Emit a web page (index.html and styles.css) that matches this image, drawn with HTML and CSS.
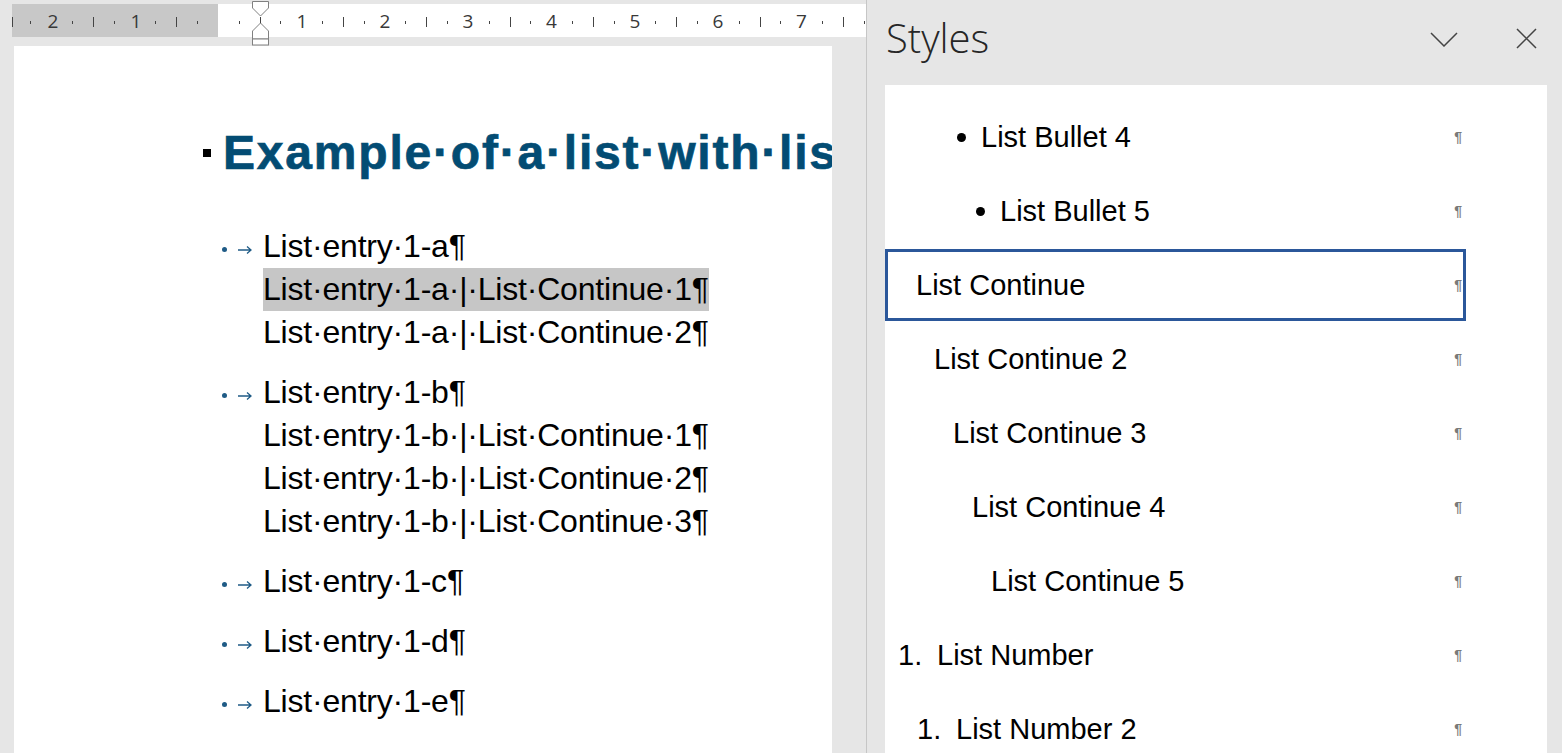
FILE: index.html
```html
<!DOCTYPE html>
<html lang="en">
<head>
  <meta charset="UTF-8" />
  <title>Styles pane - List Continue</title>
  <link rel="stylesheet" href="styles.css">
</head>
<body>

  <div class="app">
    <!-- Document area: ruler + page -->
    <div class="workspace">
      <svg class="ruler" width="866" height="46" viewBox="0 0 866 46">
        <rect x="12" y="4" width="206" height="33" fill="#c8c8c8" />
        <rect x="218" y="4" width="648" height="33" fill="#ffffff" />
        <g fill="#444">
          <rect x="12" y="17" width="1" height="10" />
          <rect x="30" y="21" width="1" height="3" />
          <rect x="72" y="21" width="1" height="3" />
          <rect x="93" y="17" width="1" height="10" />
          <rect x="114" y="21" width="1" height="3" />
          <rect x="155" y="21" width="1" height="3" />
          <rect x="176" y="17" width="1" height="10" />
          <rect x="197" y="21" width="1" height="3" />
          <rect x="239" y="21" width="1" height="3" />
          <rect x="260" y="17" width="1" height="10" />
          <rect x="280" y="21" width="1" height="3" />
          <rect x="322" y="21" width="1" height="3" />
          <rect x="343" y="17" width="1" height="10" />
          <rect x="364" y="21" width="1" height="3" />
          <rect x="405" y="21" width="1" height="3" />
          <rect x="426" y="17" width="1" height="10" />
          <rect x="447" y="21" width="1" height="3" />
          <rect x="489" y="21" width="1" height="3" />
          <rect x="510" y="17" width="1" height="10" />
          <rect x="530" y="21" width="1" height="3" />
          <rect x="572" y="21" width="1" height="3" />
          <rect x="593" y="17" width="1" height="10" />
          <rect x="614" y="21" width="1" height="3" />
          <rect x="655" y="21" width="1" height="3" />
          <rect x="676" y="17" width="1" height="10" />
          <rect x="697" y="21" width="1" height="3" />
          <rect x="739" y="21" width="1" height="3" />
          <rect x="760" y="17" width="1" height="10" />
          <rect x="780" y="21" width="1" height="3" />
          <rect x="822" y="21" width="1" height="3" />
          <rect x="843" y="17" width="1" height="10" />
          <rect x="864" y="21" width="1" height="3" />
        </g>
        <g class="ruler-num" text-anchor="middle">
          <text x="53" y="28">2</text>
          <text x="136" y="28">1</text>
          <text x="302" y="28">1</text>
          <text x="385" y="28">2</text>
          <text x="468" y="28">3</text>
          <text x="551.5" y="28">4</text>
          <text x="635" y="28">5</text>
          <text x="718" y="28">6</text>
          <text x="801.5" y="28">7</text>
        </g>
        <!-- indent markers -->
        <g fill="#fff" stroke="#808080" stroke-width="1">
          <polygon points="252.5,1.5 268.5,1.5 268.5,8 260.5,16 252.5,8" />
          <polygon points="260.5,23 268.5,31 268.5,39 252.5,39 252.5,31" />
          <rect x="252.5" y="39" width="16" height="6" />
        </g>
      </svg>

      <div class="page">
        <h1 class="heading"><span class="heading-mark"></span>Example·of·a·list·with·list·continue·paragraphs¶</h1>

        <div class="entry">
          <div class="marker"><span class="dot"></span><svg class="tab" width="14" height="8" viewBox="0 0 14 8"><path d="M0 4H13M9 0.5L13 4L9 7.5" /></svg></div>
          <div class="lines">
            <div class="line">List·entry·1-a¶</div>
            <div class="line"><span class="hl">List·entry·1-a·|·List·Continue·1¶</span></div>
            <div class="line">List·entry·1-a·|·List·Continue·2¶</div>
          </div>
        </div>

        <div class="entry">
          <div class="marker"><span class="dot"></span><svg class="tab" width="14" height="8" viewBox="0 0 14 8"><path d="M0 4H13M9 0.5L13 4L9 7.5" /></svg></div>
          <div class="lines">
            <div class="line">List·entry·1-b¶</div>
            <div class="line">List·entry·1-b·|·List·Continue·1¶</div>
            <div class="line">List·entry·1-b·|·List·Continue·2¶</div>
            <div class="line">List·entry·1-b·|·List·Continue·3¶</div>
          </div>
        </div>

        <div class="entry">
          <div class="marker"><span class="dot"></span><svg class="tab" width="14" height="8" viewBox="0 0 14 8"><path d="M0 4H13M9 0.5L13 4L9 7.5" /></svg></div>
          <div class="lines"><div class="line">List·entry·1-c¶</div></div>
        </div>

        <div class="entry">
          <div class="marker"><span class="dot"></span><svg class="tab" width="14" height="8" viewBox="0 0 14 8"><path d="M0 4H13M9 0.5L13 4L9 7.5" /></svg></div>
          <div class="lines"><div class="line">List·entry·1-d¶</div></div>
        </div>

        <div class="entry">
          <div class="marker"><span class="dot"></span><svg class="tab" width="14" height="8" viewBox="0 0 14 8"><path d="M0 4H13M9 0.5L13 4L9 7.5" /></svg></div>
          <div class="lines"><div class="line">List·entry·1-e¶</div></div>
        </div>
      </div>
    </div>

    <!-- Styles pane -->
    <aside class="pane">
      <div class="pane-head">
        <h2 class="pane-title">Styles</h2>
        <svg class="icon-chevron" width="28" height="15" viewBox="0 0 28 15"><polyline points="1,1 14,14 27,1" /></svg>
        <svg class="icon-close" width="21" height="21" viewBox="0 0 21 21"><path d="M1 1L20 20M20 1L1 20" /></svg>
      </div>

      <div class="style-list">
        <div class="style-row">
          <span class="bullet lb4"></span><span class="label">List Bullet 4</span>
          <span class="pilcrow">¶</span>
        </div>
        <div class="style-row">
          <span class="bullet lb5"></span><span class="label">List Bullet 5</span>
          <span class="pilcrow">¶</span>
        </div>
        <div class="style-row selected">
          <span class="label lc1">List Continue</span>
          <span class="pilcrow">¶</span>
        </div>
        <div class="style-row">
          <span class="label lc2">List Continue 2</span>
          <span class="pilcrow">¶</span>
        </div>
        <div class="style-row">
          <span class="label lc3">List Continue 3</span>
          <span class="pilcrow">¶</span>
        </div>
        <div class="style-row">
          <span class="label lc4">List Continue 4</span>
          <span class="pilcrow">¶</span>
        </div>
        <div class="style-row">
          <span class="label lc5">List Continue 5</span>
          <span class="pilcrow">¶</span>
        </div>
        <div class="style-row">
          <span class="num ln1">1.</span><span class="label">List Number</span>
          <span class="pilcrow">¶</span>
        </div>
        <div class="style-row">
          <span class="num ln2">1.</span><span class="label">List Number 2</span>
          <span class="pilcrow">¶</span>
        </div>
      </div>
    </aside>
  </div>

</body>
</html>
```

FILE: styles.css
```css
body {
  margin: 0;
  background: #e6e6e6;
  font-family: "Liberation Sans", Arial, sans-serif;
  overflow: hidden;
}

.app {
  display: flex;
  height: 753px;
}

/* --- Document side --- */
.workspace {
  width: 866px;
  flex: none;
  display: flex;
  flex-direction: column;
}

.ruler {
  display: block;
}

.ruler-num {
  font-family: "Open Sans", sans-serif;
  font-size: 19px;
  fill: #383838;
}

.page {
  margin-left: 14px;
  width: 818px;
  flex: 1;
  background: #fff;
  box-sizing: border-box;
  padding: 80px 0 0 189px;
  overflow: hidden;
  white-space: nowrap;
}

.heading {
  display: flex;
  align-items: center;
  margin: 0 0 45px;
  font-family: "Liberation Sans", Arial, sans-serif;
  font-size: 48px;
  line-height: 54px;
  font-weight: bold;
  letter-spacing: 1.8px;
  -webkit-text-stroke: 0.7px #034c73;
  color: #034c73;
}

.heading-mark {
  width: 8px;
  height: 8px;
  background: #000;
  margin-right: 12px;
  flex: none;
}

.entry {
  display: flex;
  margin-left: 15px;
  margin-top: 17px;
}

.heading + .entry {
  margin-top: 0;
}

.marker {
  width: 45px;
  height: 43px;
  flex: none;
  display: flex;
  align-items: center;
  padding-top: 6px;
  box-sizing: border-box;
}

.dot {
  width: 5px;
  height: 5px;
  border-radius: 50%;
  background: #1f5b86;
  margin-left: 4px;
}

.tab {
  margin-left: 11px;
}

.tab path {
  fill: none;
  stroke: #1f5b86;
  stroke-width: 1.3;
}

.line {
  font-size: 32px;
  line-height: 43px;
  letter-spacing: -0.2px;
  color: #000;
}

.hl {
  display: inline-block;
  background: #c6c6c6;
}

/* --- Styles pane --- */
.pane {
  flex: 1;
  border-left: 1px solid #c6c6c6;
  padding: 0 15px 0 18px;
  display: flex;
  flex-direction: column;
}

.pane-head {
  height: 85px;
  flex: none;
  display: flex;
  align-items: flex-start;
}

.pane-title {
  margin: 11px 0 0 1px;
  font-family: "Open Sans", sans-serif;
  font-weight: 300;
  font-size: 40px;
  line-height: 54px;
  color: #262626;
}

.icon-chevron {
  margin: 32px 0 0 auto;
}

.icon-close {
  margin: 28px 10px 0 58px;
}

.icon-chevron polyline,
.icon-close path {
  fill: none;
  stroke: #444;
  stroke-width: 1.5;
}

.style-list {
  flex: 1;
  background: #fff;
  padding-top: 16px;
  overflow: hidden;
}

.style-row {
  width: 581px;
  height: 72px;
  margin-bottom: 2px;
  box-sizing: border-box;
  border: 3px solid transparent;
  display: flex;
  align-items: center;
  font-size: 29px;
  color: #000;
  white-space: nowrap;
}

.style-row.selected {
  border-color: #2b579a;
}

.bullet {
  width: 9px;
  height: 9px;
  border-radius: 50%;
  background: #000;
  margin-right: 15px;
  flex: none;
}

.lb4 { margin-left: 69px; }
.lb5 { margin-left: 88px; }

.lc1 { margin-left: 28px; }
.lc2 { margin-left: 46px; }
.lc3 { margin-left: 65px; }
.lc4 { margin-left: 84px; }
.lc5 { margin-left: 103px; }

.num {
  width: 39px;
  flex: none;
}

.ln1 { margin-left: 10px; }
.ln2 { margin-left: 29px; }

.pilcrow {
  margin-left: auto;
  margin-right: 1px;
  font-size: 14px;
  font-weight: bold;
  color: #7a7a7a;
}
```
